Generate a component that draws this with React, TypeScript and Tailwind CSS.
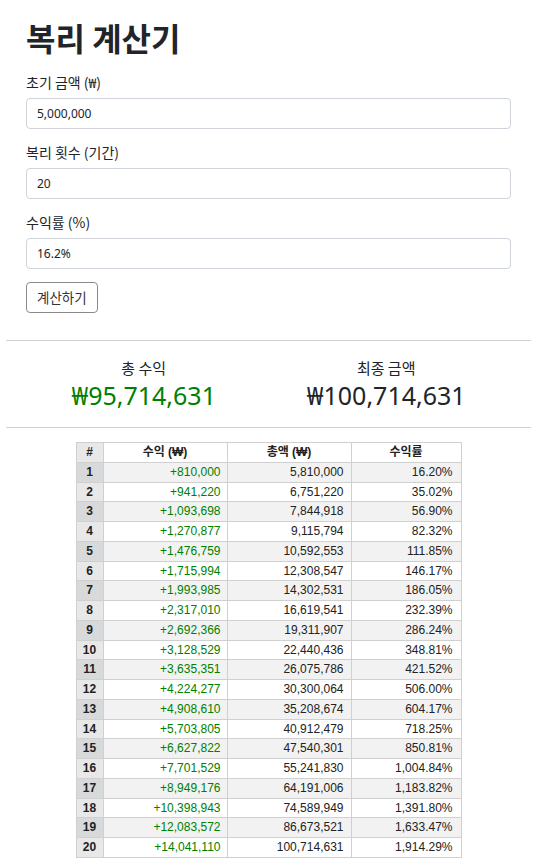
import React from "react";

const rows: [string, string, string][] = [
  ["+810,000", "5,810,000", "16.20%"],
  ["+941,220", "6,751,220", "35.02%"],
  ["+1,093,698", "7,844,918", "56.90%"],
  ["+1,270,877", "9,115,794", "82.32%"],
  ["+1,476,759", "10,592,553", "111.85%"],
  ["+1,715,994", "12,308,547", "146.17%"],
  ["+1,993,985", "14,302,531", "186.05%"],
  ["+2,317,010", "16,619,541", "232.39%"],
  ["+2,692,366", "19,311,907", "286.24%"],
  ["+3,128,529", "22,440,436", "348.81%"],
  ["+3,635,351", "26,075,786", "421.52%"],
  ["+4,224,277", "30,300,064", "506.00%"],
  ["+4,908,610", "35,208,674", "604.17%"],
  ["+5,703,805", "40,912,479", "718.25%"],
  ["+6,627,822", "47,540,301", "850.81%"],
  ["+7,701,529", "55,241,830", "1,004.84%"],
  ["+8,949,176", "64,191,006", "1,183.82%"],
  ["+10,398,943", "74,589,949", "1,391.80%"],
  ["+12,083,572", "86,673,521", "1,633.47%"],
  ["+14,041,110", "100,714,631", "1,914.29%"],
];

const cjk = { fontFamily: '"Noto Sans CJK KR", sans-serif' };

function Field({ label, value }: { label: string; value: string }) {
  return (
    <div className="mb-[13px]">
      <div className="text-[14px] leading-[20px] mb-[6px] text-[#212529]" style={cjk}>
        {label}
      </div>
      <div className="h-[31px] border border-[#ced4da] rounded-[4px] flex items-center pl-[10px] text-[12px] text-[#212529]">
        {value}
      </div>
    </div>
  );
}

export default function App() {
  return (
    <div
      className="px-[6px] bg-white min-h-[864px]"
      style={{ fontFamily: '"Noto Sans", "Noto Sans CJK KR", sans-serif' }}
    >
      <div className="px-[20px] pt-[19px]">
        <h1 className="text-[32px] leading-[36px] font-bold text-[#212529] mb-[17px]" style={cjk}>
          복리 계산기
        </h1>
        <Field label="초기 금액 (₩)" value="5,000,000" />
        <Field label="복리 횟수 (기간)" value="20" />
        <Field label="수익률 (%)" value="16.2%" />
        <button
          className="h-[31px] px-[10px] border border-[#8a8a8a] rounded-[4px] text-[13.5px] text-[#333] bg-white"
          style={cjk}
        >
          계산하기
        </button>
      </div>
      <div className="mt-[27px] h-px bg-[#d0d0d0]" />
      <div className="px-[20px] pt-[17px] pb-[17px] flex justify-around">
        <div className="flex flex-col items-center">
          <div className="text-[15px] leading-[20px] text-[#212529]" style={cjk}>총 수익</div>
          <div className="mt-[2px] text-[25px] leading-[30px] text-[#008000]">₩95,714,631</div>
        </div>
        <div className="flex flex-col items-center">
          <div className="text-[15px] leading-[20px] text-[#212529]" style={cjk}>최종 금액</div>
          <div className="mt-[2px] text-[25px] leading-[30px] text-[#212529]">₩100,714,631</div>
        </div>
      </div>
      <div className="h-px bg-[#d0d0d0]" />
      <table
        className="mx-auto mt-[14px] border-collapse text-[12px] text-[#222]"
        style={{ fontFamily: '"Liberation Sans", "Noto Sans CJK KR", sans-serif' }}
      >
        <thead>
          <tr className="leading-[18.75px]">
            <th className="w-[27px] border border-[#d0d0d0] bg-[#e8e8e8] font-bold p-0">#</th>
            <th className="w-[124px] border border-[#d0d0d0] bg-white font-bold p-0">수익 (₩)</th>
            <th className="w-[124px] border border-[#d0d0d0] bg-white font-bold p-0">총액 (₩)</th>
            <th className="w-[110px] border border-[#d0d0d0] bg-white font-bold p-0">수익률</th>
          </tr>
        </thead>
        <tbody>
          {rows.map((r, i) => {
            const odd = i % 2 === 0;
            return (
              <tr key={i} className={"leading-[18.75px] " + (odd ? "bg-[#f2f2f2]" : "bg-white")}>
                <td
                  className={
                    "border border-[#d0d0d0] text-center font-bold p-0 " +
                    (odd ? "bg-[#d8d9db]" : "bg-[#e8e8e8]")
                  }
                >
                  {i + 1}
                </td>
                <td className="border border-[#d0d0d0] text-right pr-[6px] py-0 text-[#008000]">{r[0]}</td>
                <td className="border border-[#d0d0d0] text-right pr-[7px] py-0">{r[1]}</td>
                <td className="border border-[#d0d0d0] text-right pr-[8px] py-0">{r[2]}</td>
              </tr>
            );
          })}
        </tbody>
      </table>
    </div>
  );
}
